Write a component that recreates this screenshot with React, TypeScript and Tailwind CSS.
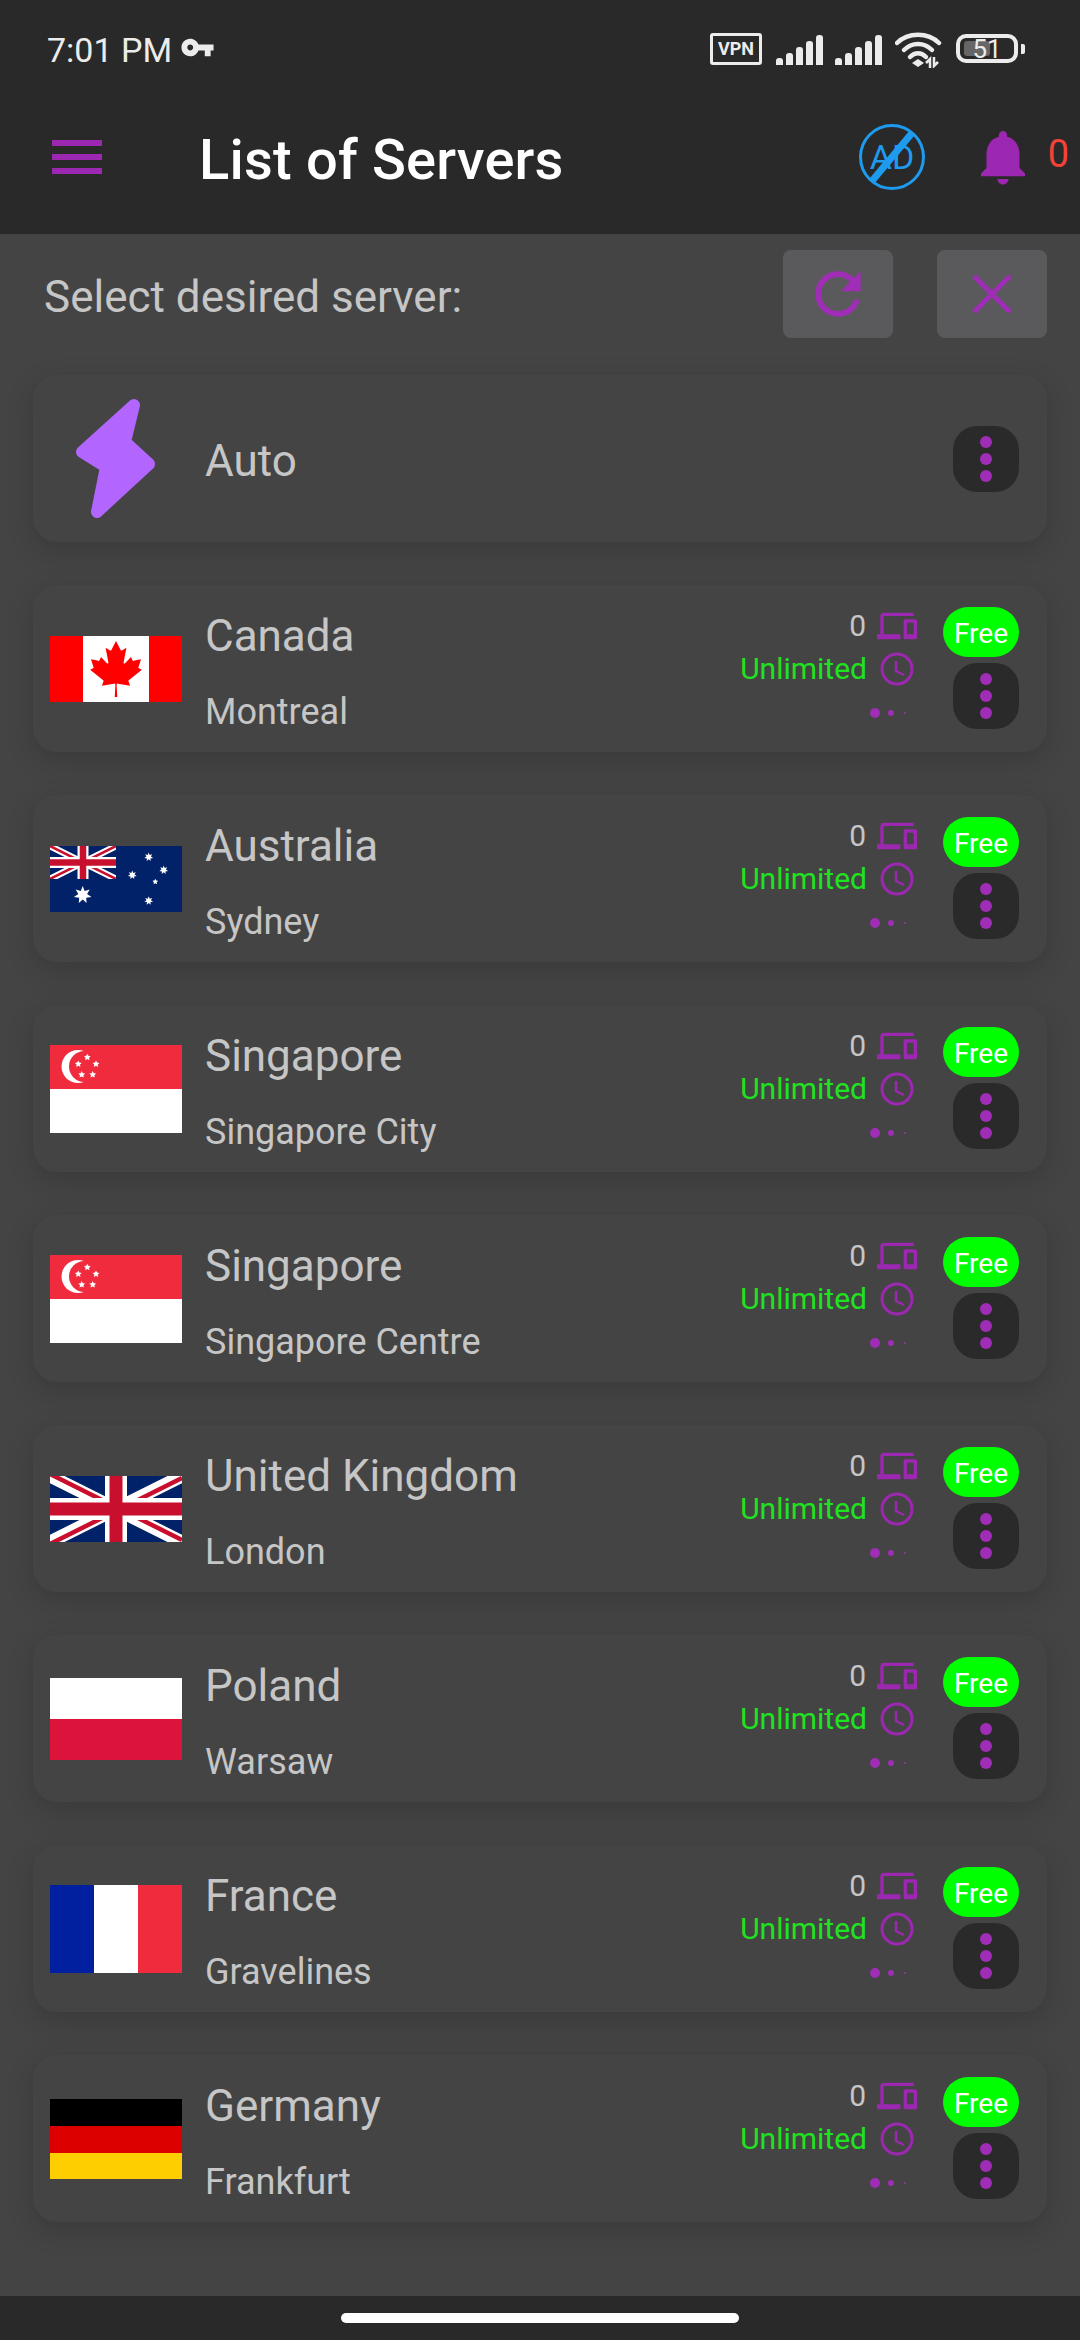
import React from "react";

const P = "#9c27b0";

function Signal() {
  const hs = [7, 12, 18, 24, 30];
  return (
    <div className="flex items-end gap-[3px] h-[30px]">
      {hs.map((h, i) => (
        <div key={i} className="w-[7px] bg-[#ececec] rounded-t-[3px]" style={{ height: h }} />
      ))}
    </div>
  );
}

function Wifi() {
  return (
    <svg width="48" height="36" viewBox="0 0 48 36" fill="none">
      <path d="M2 11 C13 0 33 0 44 11" stroke="#ececec" strokeWidth="4.5" strokeLinecap="round" />
      <path d="M9 18 C17 10 29 10 37 18" stroke="#ececec" strokeWidth="4.5" strokeLinecap="round" />
      <path d="M15 25 C20 20 26 20 31 25" stroke="#ececec" strokeWidth="4.5" strokeLinecap="round" />
      <path d="M23 27 L29 31 L23 35 L17 31 Z" fill="#ececec" />
      <path d="M35 36 V27 L31 31 M39 25 V34 L43 30" stroke="#ececec" strokeWidth="2.5" />
    </svg>
  );
}

function Devices() {
  return (
    <svg width="40" height="40" viewBox="0 0 24 24" fill={P}>
      <path d="M4 6h18V4H4c-1.1 0-2 .9-2 2v11H0v3h14v-3H4V6zm19 2h-6c-.55 0-1 .45-1 1v10c0 .55.45 1 1 1h6c.55 0 1-.45 1-1V9c0-.55-.45-1-1-1zm-1 9h-4v-7h4v7z" />
    </svg>
  );
}

function Clock() {
  return (
    <svg width="34" height="34" viewBox="0 0 34 34" fill="none" stroke={P} strokeWidth="3">
      <circle cx="17" cy="17" r="15" />
      <path d="M16 9 V19 L24 23" strokeWidth="2.5" />
    </svg>
  );
}

function Kebab() {
  return (
    <div className="w-[66px] h-[66px] rounded-[24px] bg-[#2a2a2a] flex flex-col items-center justify-center gap-[5px]">
      <div className="w-[12px] h-[12px] rounded-full bg-[#a02db5]" />
      <div className="w-[12px] h-[12px] rounded-full bg-[#a02db5]" />
      <div className="w-[12px] h-[12px] rounded-full bg-[#a02db5]" />
    </div>
  );
}

function Star({ cx, cy, r, fill, n = 5 }: { cx: number; cy: number; r: number; fill: string; n?: number }) {
  const pts: string[] = [];
  for (let i = 0; i < n * 2; i++) {
    const a = -Math.PI / 2 + (i * Math.PI) / n;
    const rr = i % 2 === 0 ? r : r * 0.5;
    pts.push(`${cx + rr * Math.cos(a)},${cy + rr * Math.sin(a)}`);
  }
  return <polygon points={pts.join(" ")} fill={fill} />;
}

function UnionJack({ w, h }: { w: number; h: number }) {
  return (
    <svg width={w} height={h} viewBox="0 0 132 66" preserveAspectRatio="none">
      <rect width="132" height="66" fill="#012169" />
      <path d="M0 0 L132 66 M132 0 L0 66" stroke="#fff" strokeWidth="13" />
      <path d="M0 0 L66 33 M132 66 L66 33" stroke="#c8102e" strokeWidth="4.5" transform="translate(0,-2)" />
      <path d="M132 0 L66 33 M0 66 L66 33" stroke="#c8102e" strokeWidth="4.5" transform="translate(0,2)" />
      <path d="M66 0 V66 M0 33 H132" stroke="#fff" strokeWidth="22" />
      <path d="M66 0 V66 M0 33 H132" stroke="#c8102e" strokeWidth="13" />
    </svg>
  );
}

function Flag({ code }: { code: string }) {
  if (code === "ca")
    return (
      <svg width="132" height="66" viewBox="0 0 132 66" className="block">
        <rect width="132" height="66" fill="#ff0000" />
        <rect x="33" width="66" height="66" fill="#fff" />
        <svg x="38" y="5" width="56" height="56" viewBox="-2015 -2000 4030 4030">
          <path
            fill="#ff0000"
            d="m-90 2030 45-863a95 95 0 0 0-111-98l-859 151 116-320a65 65 0 0 0-20-73l-941-762 212-99a65 65 0 0 0 34-79l-186-572 542 115a65 65 0 0 0 73-38l105-247 423 454a65 65 0 0 0 111-57l-204-1052 327 189a65 65 0 0 0 91-27l332-652 332 652a65 65 0 0 0 91 27l327-189-204 1052a65 65 0 0 0 111 57l423-454 105 247a65 65 0 0 0 73 38l542-115-186 572a65 65 0 0 0 34 79l212 99-941 762a65 65 0 0 0-20 73l116 320-859-151a95 95 0 0 0-111 98l45 863z"
          />
        </svg>
      </svg>
    );
  if (code === "au")
    return (
      <svg width="132" height="66" viewBox="0 0 132 66" className="block">
        <rect width="132" height="66" fill="#012169" />
        <svg x="0" y="0" width="66" height="33" viewBox="0 0 132 66">
          <rect width="132" height="66" fill="#012169" />
          <path d="M0 0 L132 66 M132 0 L0 66" stroke="#fff" strokeWidth="13" />
          <path d="M0 0 L132 66 M132 0 L0 66" stroke="#c8102e" strokeWidth="5" />
          <path d="M66 0 V66 M0 33 H132" stroke="#fff" strokeWidth="22" />
          <path d="M66 0 V66 M0 33 H132" stroke="#c8102e" strokeWidth="13" />
        </svg>
        <Star cx={32.7} cy={49} r={9} fill="#fff" n={7} />
        <Star cx={98.7} cy={11} r={4.5} fill="#fff" n={7} />
        <Star cx={113.7} cy={24} r={4.5} fill="#fff" n={7} />
        <Star cx={82.3} cy={29} r={4.5} fill="#fff" n={7} />
        <Star cx={105.3} cy={35.7} r={3} fill="#fff" />
        <Star cx={98.7} cy={54.7} r={4.5} fill="#fff" n={7} />
      </svg>
    );
  if (code === "sg")
    return (
      <svg width="132" height="88" viewBox="0 0 132 88" className="block">
        <rect width="132" height="44" fill="#ef2b3d" />
        <rect y="44" width="132" height="44" fill="#fff" />
        <circle cx="28" cy="21.5" r="16.5" fill="#fff" />
        <circle cx="34.5" cy="21.5" r="15.5" fill="#ef2b3d" />
        <Star cx={37.3} cy={12.3} r={3.6} fill="#fff" />
        <Star cx={46} cy={19} r={3.6} fill="#fff" />
        <Star cx={42.7} cy={29.7} r={3.6} fill="#fff" />
        <Star cx={31.7} cy={29.7} r={3.6} fill="#fff" />
        <Star cx={28.3} cy={19} r={3.6} fill="#fff" />
      </svg>
    );
  if (code === "uk")
    return (
      <div className="block w-[132px] h-[66px]">
        <UnionJack w={132} h={66} />
      </div>
    );
  if (code === "pl")
    return (
      <svg width="132" height="82" viewBox="0 0 132 82" className="block">
        <rect width="132" height="41" fill="#fff" />
        <rect y="41" width="132" height="41" fill="#dc143c" />
      </svg>
    );
  if (code === "fr")
    return (
      <svg width="132" height="88" viewBox="0 0 132 88" className="block">
        <rect width="44" height="88" fill="#00209f" />
        <rect x="44" width="44" height="88" fill="#fff" />
        <rect x="88" width="44" height="88" fill="#ef2b3d" />
      </svg>
    );
  return (
    <svg width="132" height="80" viewBox="0 0 132 80" className="block">
      <rect width="132" height="27" fill="#000" />
      <rect y="27" width="132" height="27" fill="#dd0000" />
      <rect y="54" width="132" height="26" fill="#ffce00" />
    </svg>
  );
}

const servers = [
  { code: "ca", country: "Canada", city: "Montreal" },
  { code: "au", country: "Australia", city: "Sydney" },
  { code: "sg", country: "Singapore", city: "Singapore City" },
  { code: "sg", country: "Singapore", city: "Singapore Centre" },
  { code: "uk", country: "United Kingdom", city: "London" },
  { code: "pl", country: "Poland", city: "Warsaw" },
  { code: "fr", country: "France", city: "Gravelines" },
  { code: "de", country: "Germany", city: "Frankfurt" },
];

function ServerRow({ code, country, city }: { code: string; country: string; city: string }) {
  return (
    <div className="h-[167px] rounded-[24px] bg-[#444444] shadow-[0_8px_28px_rgba(0,0,0,0.16)] flex pl-[17px] pr-[28px]">
      <div className="w-[132px] flex items-center shrink-0">
        <Flag code={code} />
      </div>
      <div className="ml-[23px] flex-1 flex flex-col pt-[27px]">
        <div className="text-[44px] leading-[48px] text-[#c6c6c6]">{country}</div>
        <div className="mt-[32px] text-[36px] leading-[40px] text-[#c6c6c6]">{city}</div>
      </div>
      <div className="flex flex-col items-end mr-[26px] pt-[21px] shrink-0">
        <div className="flex items-center h-[40px]">
          <span className="text-[30px] leading-[36px] text-[#c6c6c6] mr-[11px]">0</span>
          <Devices />
        </div>
        <div className="flex items-center h-[40px] mt-[3px] pr-[3px]">
          <span className="text-[30px] leading-[36px] text-[#1fe31f] mr-[13px]">Unlimited</span>
          <Clock />
        </div>
        <div className="flex items-center gap-[8px] h-[10px] mt-[19px] pr-[11px]">
          <div className="w-[10px] h-[10px] rounded-full bg-[#a02db5]" />
          <div className="w-[6px] h-[6px] rounded-full bg-[#a02db5]" />
          <div className="w-[2px] h-[2px] rounded-full bg-[#a02db5] ml-[2px]" />
        </div>
      </div>
      <div className="flex flex-col items-end pt-[22px] gap-[6px] shrink-0">
        <div className="w-[76px] h-[50px] rounded-[25px] bg-[#00ff00] text-white text-[28px] leading-[54px] text-center">Free</div>
        <Kebab />
      </div>
    </div>
  );
}

export default function App() {
  return (
    <div className="w-[1080px] h-[2340px] bg-[#444444] flex flex-col overflow-hidden font-['Roboto',sans-serif]">
      <div className="bg-[#292929] h-[234px] shrink-0 flex flex-col">
        <div className="h-[96px] flex items-start pl-[47px] pr-[55px] pt-[30px]">
          <span className="text-[34px] leading-[40px] text-[#ececec]">7:01 PM</span>
          <svg width="35" height="35" viewBox="0 0 24 24" fill="#ececec" className="ml-[8px]">
            <path d="M12.65 10C11.83 7.67 9.61 6 7 6c-3.31 0-6 2.69-6 6s2.69 6 6 6c2.61 0 4.83-1.67 5.65-4H17v4h4v-4h2v-4H12.65zM7 14c-1.1 0-2-.9-2-2s.9-2 2-2 2 .9 2 2-.9 2-2 2z" />
          </svg>
          <div className="ml-auto flex items-start mt-[3px]">
            <div className="w-[52px] h-[32px] border-[3px] border-[#ececec] rounded-[3px] text-[#ececec] text-[18px] leading-[26px] font-bold text-center">VPN</div>
            <div className="ml-[14px] mt-[2px]"><Signal /></div>
            <div className="ml-[12px] mt-[2px]"><Signal /></div>
            <div className="ml-[13px] -mt-[1px]"><Wifi /></div>
            <div className="ml-[13px] mt-[1px] w-[62px] h-[29px] border-[4px] border-[#ececec] rounded-[10px] relative text-center text-[26px] leading-[22px] text-[#ececec]">
              <div className="absolute left-[4px] top-[3px] bottom-[3px] w-[26px] bg-[#666666] rounded-[3px]" />
              <span className="relative">51</span>
            </div>
            <div className="ml-[3px] mt-[11px] w-[4px] h-[10px] bg-[#ececec] rounded-r-[2px]" />
          </div>
        </div>
        <div className="flex items-center pl-[52px] pr-[11px] h-[122px]">
          <div className="w-[50px] flex flex-col gap-[8px]">
            <div className="h-[6px] bg-[#9c27b0]" />
            <div className="h-[6px] bg-[#9c27b0]" />
            <div className="h-[6px] bg-[#9c27b0]" />
          </div>
          <div className="ml-[97px] pt-[5px] text-[56px] tracking-[0.2px] leading-[60px] font-medium text-white">List of Servers</div>
          <svg width="68" height="68" viewBox="0 0 68 68" fill="none" className="ml-auto">
            <circle cx="34" cy="34" r="31.5" stroke="#1e9bef" strokeWidth="3" />
            <text x="34" y="46" textAnchor="middle" fontSize="34" fill="#1e9bef" fontFamily="Roboto">AD</text>
            <path d="M14 58 L54 10" stroke="#1e9bef" strokeWidth="7" />
          </svg>
          <svg width="66" height="66" viewBox="0 0 24 24" fill={P} className="ml-[44px]">
            <path d="M12 22c1.1 0 2-.9 2-2h-4c0 1.1.89 2 2 2zm6-6v-5c0-3.07-1.64-5.64-4.5-6.32V4c0-.83-.67-1.5-1.5-1.5s-1.5.67-1.5 1.5v.68C7.63 5.36 6 7.92 6 11v5l-2 2v1h16v-1l-2-2z" />
          </svg>
          <span className="ml-[12px] text-[38px] leading-[44px] text-[#f44336] -mt-[6px]">0</span>
        </div>
      </div>

      <div className="flex-1 px-[33px] min-h-0">
        <div className="flex items-center pt-[16px] h-[104px]">
          <span className="ml-[11px] pt-[5px] text-[44px] leading-[46px] text-[#c6c6c6]">Select desired server:</span>
          <div className="ml-auto w-[110px] h-[88px] rounded-[8px] bg-[#5a5a5c] flex items-center justify-center">
            <svg width="68" height="68" viewBox="0 0 24 24" fill="#a02db5">
              <path d="M17.65 6.35C16.2 4.9 14.21 4 12 4c-4.42 0-7.99 3.58-7.99 8s3.57 8 7.99 8c3.73 0 6.84-2.55 7.73-6h-2.08c-.82 2.33-3.04 4-5.65 4-3.31 0-6-2.69-6-6s2.69-6 6-6c1.66 0 3.14.69 4.22 1.78L13 11h7V4l-2.35 2.35z" />
            </svg>
          </div>
          <div className="ml-[44px] w-[110px] h-[88px] rounded-[8px] bg-[#5a5a5c] flex items-center justify-center">
            <svg width="40" height="40" viewBox="0 0 40 40" stroke="#a02db5" strokeWidth="5">
              <path d="M2 2 L38 38 M38 2 L2 38" />
            </svg>
          </div>
        </div>

        <div className="mt-[37px] flex flex-col gap-[43px]">
          <div className="h-[167px] rounded-[24px] bg-[#444444] shadow-[0_8px_28px_rgba(0,0,0,0.16)] flex items-center pl-[42px] pr-[28px]">
            <svg width="81" height="121" viewBox="0 0 81 121" fill="#b366ff" stroke="#b366ff" strokeWidth="12" strokeLinejoin="round" className="shrink-0">
              <path d="M59 7 L7 54 L31 69 L22 114 L74 66 L50 44 Z" />
            </svg>
            <span className="ml-[49px] pt-[5px] text-[44px] leading-[48px] text-[#c6c6c6]">Auto</span>
            <div className="ml-auto"><Kebab /></div>
          </div>
          {servers.map((s, i) => (
            <ServerRow key={i} {...s} />
          ))}
        </div>
      </div>

      <div className="h-[44px] shrink-0 bg-[#292929] flex justify-center pt-[17px]">
        <div className="w-[398px] h-[10px] rounded-full bg-white" />
      </div>
    </div>
  );
}
